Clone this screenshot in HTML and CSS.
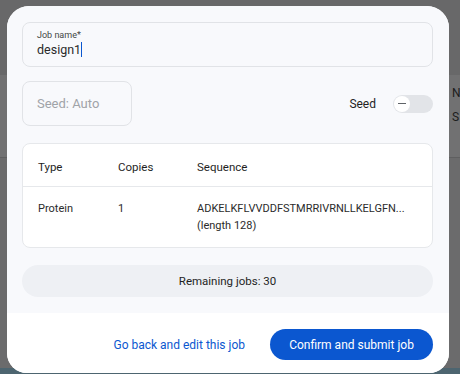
FILE: index.html
```html
<!DOCTYPE html>
<html>
<head>
<meta charset="utf-8">
<link rel="stylesheet" href="styles.css">
</head>
<body>
<div class="backdrop">
  <div class="bd-top"></div>
  <div class="bd-band"><span class="bd-n">N</span><span class="bd-s">S</span></div>
  <div class="bd-rest"></div>
  <div class="bd-foot"></div>
</div>
<div class="dialog">
  <div class="body">
    <div class="field job">
      <div class="label">Job name*</div>
      <div class="value">design1<span class="caret"></span></div>
    </div>
    <div class="seed-row">
      <div class="field seed"><span class="placeholder">Seed: Auto</span></div>
      <div class="seed-toggle">
        <span class="seed-label">Seed</span>
        <span class="switch"><span class="knob"><span class="dash"></span></span></span>
      </div>
    </div>
    <div class="table">
      <div class="row head">
        <div class="c1">Type</div><div class="c2">Copies</div><div class="c3">Sequence</div>
      </div>
      <div class="row data">
        <div class="c1">Protein</div><div class="c2">1</div>
        <div class="c3">ADKELKFLVVDDFSTMRRIVRNLLKELGFN...<br>(length 128)</div>
      </div>
    </div>
    <div class="remaining">Remaining jobs: 30</div>
  </div>
  <div class="footer">
    <button class="link">Go back and edit this job</button>
    <button class="primary">Confirm and submit job</button>
  </div>
</div>
</body>
</html>
```

FILE: styles.css
```css
html, body {
  margin: 0;
  padding: 0;
}
body {
  width: 460px;
  height: 374px;
  overflow: hidden;
  background: #6d6d6e;
  font-family: Roboto, "Liberation Sans", sans-serif;
  position: relative;
}
.backdrop {
  display: flex;
  flex-direction: column;
  height: 374px;
}
.bd-top {
  height: 75px;
  background: #686869;
}
.bd-band {
  height: 82px;
  background: #717172;
  border-bottom: 1px solid #5f5f60;
  position: relative;
  font-size: 12px;
  color: #1c1c1c;
}
.bd-n { position: absolute; left: 452px; top: 11px; }
.bd-s { position: absolute; left: 452px; top: 35px; }
.bd-rest {
  flex: 1;
  background: #6b6b6c;
}
.bd-foot {
  height: 6px;
  background: #4d6570;
}
.dialog {
  position: absolute;
  left: 7px;
  top: 6px;
  width: 442px;
  height: 367px;
  border-radius: 22px 22px 20px 20px;
  overflow: hidden;
  background: #ffffff;
  display: flex;
  flex-direction: column;
}
.body {
  background: #f8f9fc;
  padding: 16px 16px 16px 15px;
  display: flex;
  flex-direction: column;
}
.field {
  box-sizing: border-box;
  border: 1px solid #e1e3e7;
  border-radius: 8px;
  background: #f8f9fc;
}
.job {
  height: 45px;
  padding: 7px 14px 0;
}
.label {
  font-size: 9px;
  color: #444746;
  line-height: 11px;
}
.value {
  font-size: 12.5px;
  color: #2a2a2a;
  line-height: 17px;
  margin-top: 0;
  display: flex;
  align-items: center;
}
.caret {
  display: inline-block;
  width: 1px;
  height: 15px;
  background: #0b57d0;
  margin-left: 0;
}
.seed-row {
  margin-top: 14px;
  display: flex;
  align-items: center;
  justify-content: space-between;
}
.seed {
  width: 110px;
  height: 45px;
  display: flex;
  align-items: center;
  padding-left: 14px;
  border-width: 1.5px;
}
.placeholder {
  font-size: 13px;
  color: #a0a3a8;
}
.seed-toggle {
  display: flex;
  align-items: center;
  gap: 17px;
}
.seed-label {
  font-size: 12px;
  color: #1f1f1f;
}
.switch {
  width: 40px;
  height: 18px;
  border-radius: 9px;
  background: #e2e4e8;
  display: flex;
  align-items: center;
  padding-left: 1px;
  box-sizing: border-box;
}
.knob {
  width: 16px;
  height: 16px;
  border-radius: 50%;
  background: #ffffff;
  display: flex;
  align-items: center;
  justify-content: center;
}
.dash {
  width: 8px;
  height: 1.5px;
  background: #5f6368;
}
.table {
  margin-top: 17px;
  background: #ffffff;
  border: 1px solid #e6e8eb;
  border-radius: 8px;
  height: 105px;
  box-sizing: border-box;
}
.row {
  display: flex;
  font-size: 11px;
  color: #1f1f1f;
  padding-left: 15px;
}
.row.head {
  height: 43px;
  box-sizing: border-box;
  padding-top: 4px;
  align-items: center;
  border-bottom: 1px solid #e6e8eb;
  font-size: 11.5px;
}
.row.data {
  padding-top: 13px;
  line-height: 17px;
  color: #2b2b2b;
}
.c1 { width: 80px; }
.c2 { width: 79px; }
.c3 { flex: 1; }
.remaining {
  margin-top: 17px;
  height: 32px;
  border-radius: 16px;
  background: #eef0f4;
  display: flex;
  align-items: center;
  justify-content: center;
  font-size: 11.5px;
  color: #1f1f1f;
}
.footer {
  flex: 1;
  background: #ffffff;
  display: flex;
  justify-content: flex-end;
  align-items: flex-start;
  padding: 16px 16px 0 0;
  gap: 13px;
}
button {
  font-family: Roboto, "Liberation Sans", sans-serif;
  font-size: 12px;
  border: none;
  cursor: pointer;
  height: 31px;
}
.link {
  background: transparent;
  color: #0b57d0;
  padding: 0 12px;
}
.primary {
  background: #0b57d0;
  color: #ffffff;
  border-radius: 16px;
  width: 163px;
  padding: 0;
}
```
